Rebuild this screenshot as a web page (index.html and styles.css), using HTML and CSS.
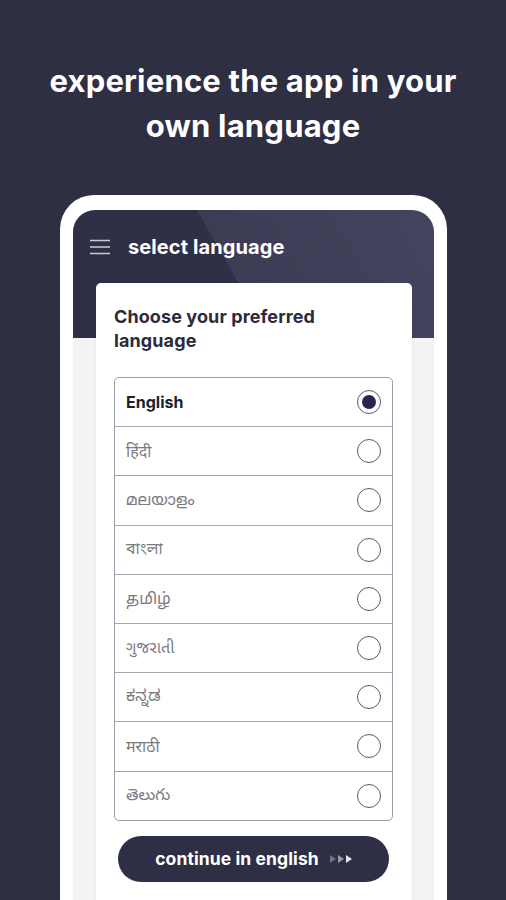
FILE: index.html
```html
<!DOCTYPE html>
<html lang="en">
<head>
<meta charset="utf-8">
<title>select language</title>
<link rel="stylesheet" href="styles.css">
</head>
<body>
<div class="page">
  <h1 class="headline">experience the app in your<br>own language</h1>
  <div class="phone">
    <div class="screen">
      <div class="appbar">
        <svg class="menu" width="20" height="16" viewBox="0 0 20 16" aria-hidden="true">
          <path d="M0 1.5H20M0 8H20M0 14.5H20" stroke="#c9c9d3" stroke-width="1.6" fill="none"/>
        </svg>
        <span class="appbar-title">select language</span>
      </div>
      <div class="card">
        <h2 class="card-title">Choose your preferred language</h2>
        <ul class="langs">
          <li class="lang selected"><span class="lang-name">English</span><span class="radio"></span></li>
          <li class="lang"><span class="lang-name">हिंदी</span><span class="radio"></span></li>
          <li class="lang"><span class="lang-name">മലയാളം</span><span class="radio"></span></li>
          <li class="lang"><span class="lang-name">বাংলা</span><span class="radio"></span></li>
          <li class="lang"><span class="lang-name">தமிழ்</span><span class="radio"></span></li>
          <li class="lang"><span class="lang-name">ગુજરાતી</span><span class="radio"></span></li>
          <li class="lang"><span class="lang-name">ಕನ್ನಡ</span><span class="radio"></span></li>
          <li class="lang"><span class="lang-name">मराठी</span><span class="radio"></span></li>
          <li class="lang"><span class="lang-name">తెలుగు</span><span class="radio"></span></li>
        </ul>
        <button class="continue">continue in english
          <svg class="arrows" width="24" height="10" viewBox="0 0 24 10" aria-hidden="true">
            <path d="M0 1L6 5L0 9Z" fill="#6f7083"/>
            <path d="M8 1L14 5L8 9Z" fill="#9a9bab"/>
            <path d="M16 1L22 5L16 9Z" fill="#e6e6ee"/>
          </svg>
        </button>
      </div>
    </div>
  </div>
</div>
</body>
</html>
```

FILE: styles.css
```css
* { box-sizing: border-box; }
html, body {
  margin: 0;
  padding: 0;
  background: #2e2f43;
}
body {
  font-family: Inter, "Noto Sans", "Noto Sans Devanagari", "Noto Sans Malayalam", "Noto Sans Bengali", "Noto Sans Tamil", "Noto Sans Gujarati", "Noto Sans Kannada", "Noto Sans Telugu", sans-serif;
  width: 506px;
  height: 900px;
  overflow: hidden;
}
.page {
  display: flex;
  flex-direction: column;
  align-items: flex-start;
}
.headline {
  align-self: stretch;
  margin: 0;
  padding-top: 58px;
  text-align: center;
  color: #ffffff;
  font-size: 31px;
  line-height: 45px;
  font-weight: 700;
  letter-spacing: 0.2px;
  white-space: nowrap;
}
.phone {
  margin: 47px 0 0 60px;
  width: 387px;
  height: 720px;
  border: 13px solid #ffffff;
  border-top-width: 15px;
  border-bottom: 0;
  border-radius: 34px 34px 0 0;
  background: #ffffff;
}
.screen {
  height: 100%;
  background: #f3f3f5;
  border-radius: 22px 22px 0 0;
  overflow: hidden;
}
.appbar {
  height: 128px;
  padding: 27px 0 0 17px;
  display: flex;
  align-items: flex-start;
  gap: 18px;
  background: linear-gradient(60.3deg, #2f3045 171px, #3c3c55 171px, #44445e 100%);
}
.menu { margin-top: 2px; flex: none; }
.appbar-title {
  color: #ffffff;
  font-size: 20px;
  font-weight: 700;
  line-height: 20px;
  letter-spacing: 0.1px;
}
.card {
  margin: -55px 22px 0 23px;
  background: #ffffff;
  border-radius: 5px 5px 0 0;
  box-shadow: 0 0 4px rgba(0,0,0,0.06);
  padding: 22px 19px 40px 18px;
  height: 640px;
}
.card-title {
  margin: 0;
  width: 240px;
  color: #2b2b3a;
  font-size: 18px;
  line-height: 24px;
  font-weight: 700;
  letter-spacing: 0.1px;
}
.langs {
  list-style: none;
  margin: 24px 0 0 0;
  padding: 0;
  border: 1px solid #9c9cab;
  border-radius: 5px;
  overflow: hidden;
}
.lang {
  height: 49.2px;
  display: flex;
  align-items: center;
  justify-content: space-between;
  padding: 0 11px 0 11px;
  border-top: 1px solid #a6a6b3;
}
.lang:first-child { border-top: 0; height: 48.2px; }
.lang-name {
  color: #7a7a82;
  font-size: 16px;
  font-weight: 400;
}
.selected .lang-name {
  color: #1f1f2a;
  font-weight: 700;
}
.radio {
  width: 24px;
  height: 24px;
  border-radius: 50%;
  border: 1.6px solid #5a5a62;
  display: flex;
  align-items: center;
  justify-content: center;
}
.selected .radio::after {
  content: "";
  width: 14px;
  height: 14px;
  border-radius: 50%;
  background: #272650;
}
.continue {
  margin: 15px 4px 0 4px;
  width: 271px;
  height: 46px;
  border: 0;
  border-radius: 23px;
  background: #2e2f44;
  color: #ffffff;
  font-family: inherit;
  font-size: 17.5px;
  font-weight: 700;
  letter-spacing: 0.1px;
  display: flex;
  align-items: center;
  justify-content: center;
  gap: 11px;
  padding: 0 0 0 2px;
}
.arrows { flex: none; }
```
